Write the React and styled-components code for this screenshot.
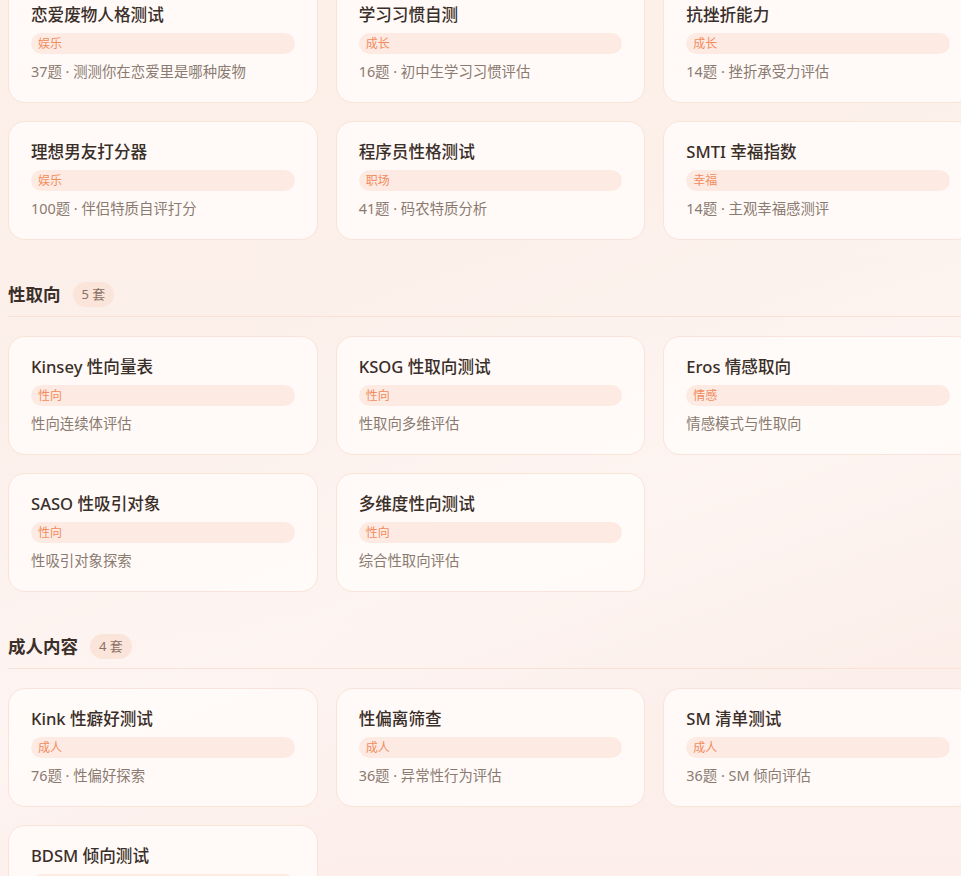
import React from 'react'
import styled, { createGlobalStyle } from 'styled-components'

const sections = [
  {
    id: 'life',
    tests: [
      { title: '恋爱废物人格测试', tag: '娱乐', desc: '37题 · 测测你在恋爱里是哪种废物' },
      { title: '学习习惯自测', tag: '成长', desc: '16题 · 初中生学习习惯评估' },
      { title: '抗挫折能力', tag: '成长', desc: '14题 · 挫折承受力评估' },
      { title: '理想男友打分器', tag: '娱乐', desc: '100题 · 伴侣特质自评打分' },
      { title: '程序员性格测试', tag: '职场', desc: '41题 · 码农特质分析' },
      { title: 'SMTI 幸福指数', tag: '幸福', desc: '14题 · 主观幸福感测评' },
    ],
  },
  {
    id: 'orientation',
    name: '性取向',
    count: 5,
    tests: [
      { title: 'Kinsey 性向量表', tag: '性向', desc: '性向连续体评估' },
      { title: 'KSOG 性取向测试', tag: '性向', desc: '性取向多维评估' },
      { title: 'Eros 情感取向', tag: '情感', desc: '情感模式与性取向' },
      { title: 'SASO 性吸引对象', tag: '性向', desc: '性吸引对象探索' },
      { title: '多维度性向测试', tag: '性向', desc: '综合性取向评估' },
    ],
  },
  {
    id: 'adult',
    name: '成人内容',
    count: 4,
    tests: [
      { title: 'Kink 性癖好测试', tag: '成人', desc: '76题 · 性偏好探索' },
      { title: '性偏离筛查', tag: '成人', desc: '36题 · 异常性行为评估' },
      { title: 'SM 清单测试', tag: '成人', desc: '36题 · SM 倾向评估' },
      { title: 'BDSM 倾向测试', tag: '成人', desc: '12题 · BDSM 角色倾向' },
    ],
  },
]

const App = () => {
  return (
    <>
      <GlobalStyle />
      <Page>
        {sections.map((section) => (
          <Section key={section.id} $first={!section.name}>
            {section.name && (
              <SectionHeader>
                <SectionTitle>{section.name}</SectionTitle>
                <CountPill>{section.count} 套</CountPill>
              </SectionHeader>
            )}
            <Grid>
              {section.tests.map((test) => (
                <Card key={test.title}>
                  <CardTitle>{test.title}</CardTitle>
                  <Tag>{test.tag}</Tag>
                  <Desc>{test.desc}</Desc>
                </Card>
              ))}
            </Grid>
          </Section>
        ))}
      </Page>
    </>
  )
}

const GlobalStyle = createGlobalStyle`
  html, body {
    margin: 0;
    padding: 0;
    overflow: hidden;
  }
  body {
    font-family: "Noto Sans", "Noto Sans CJK SC", sans-serif;
    background:
      linear-gradient(160deg, rgba(255, 255, 255, 0) 30%, rgba(255, 255, 255, 0.35) 55%, rgba(255, 255, 255, 0) 75%),
      linear-gradient(180deg, #fcf0e9 0%, #fcefea 60%, #fdeeea 100%);
    min-height: 100vh;
  }
`

const Page = styled.main`
  width: 965px;
  padding: 0 0 40px 8px;
  margin-top: -16px;
`

const Section = styled.section`
  margin-top: ${({ $first }) => ($first ? '0' : '42px')};
`

const SectionHeader = styled.div`
  display: flex;
  align-items: center;
  gap: 12px;
  height: 25px;
  padding-bottom: 9px;
  border-bottom: 1px solid #f8e1d6;
  margin-bottom: 19px;
`

const SectionTitle = styled.h2`
  margin: 0;
  font-size: 17.5px;
  font-weight: 600;
  color: #3b2f29;
  line-height: 25px;
`

const CountPill = styled.span`
  display: inline-flex;
  align-items: center;
  height: 25px;
  padding: 0 9px;
  border-radius: 13px;
  background: #fbe4d9;
  color: #8a7064;
  font-size: 13px;
  line-height: 25px;
`

const Grid = styled.div`
  display: grid;
  grid-template-columns: repeat(3, 1fr);
  gap: 18px;
`

const Card = styled.article`
  display: flex;
  flex-direction: column;
  box-sizing: border-box;
  height: 119px;
  padding: 18px 22px 20px 22px;
  border: 1px solid #f9e4da;
  border-radius: 17px;
  background: rgba(255, 251, 249, 0.92);
`

const CardTitle = styled.h3`
  margin: 0;
  font-size: 16.6px;
  font-weight: 500;
  line-height: 24px;
  height: 24px;
  color: #3a2e28;
`

const Tag = styled.span`
  margin-top: 6px;
  height: 21px;
  display: flex;
  align-items: center;
  padding: 0 7px;
  border-radius: 11px;
  background: #fdebe3;
  color: #f28c5f;
  font-size: 12px;
  line-height: 21px;
`

const Desc = styled.p`
  margin: 8px 0 0;
  font-size: 14.4px;
  line-height: 20px;
  height: 20px;
  color: #8b7a70;
`

export default App
